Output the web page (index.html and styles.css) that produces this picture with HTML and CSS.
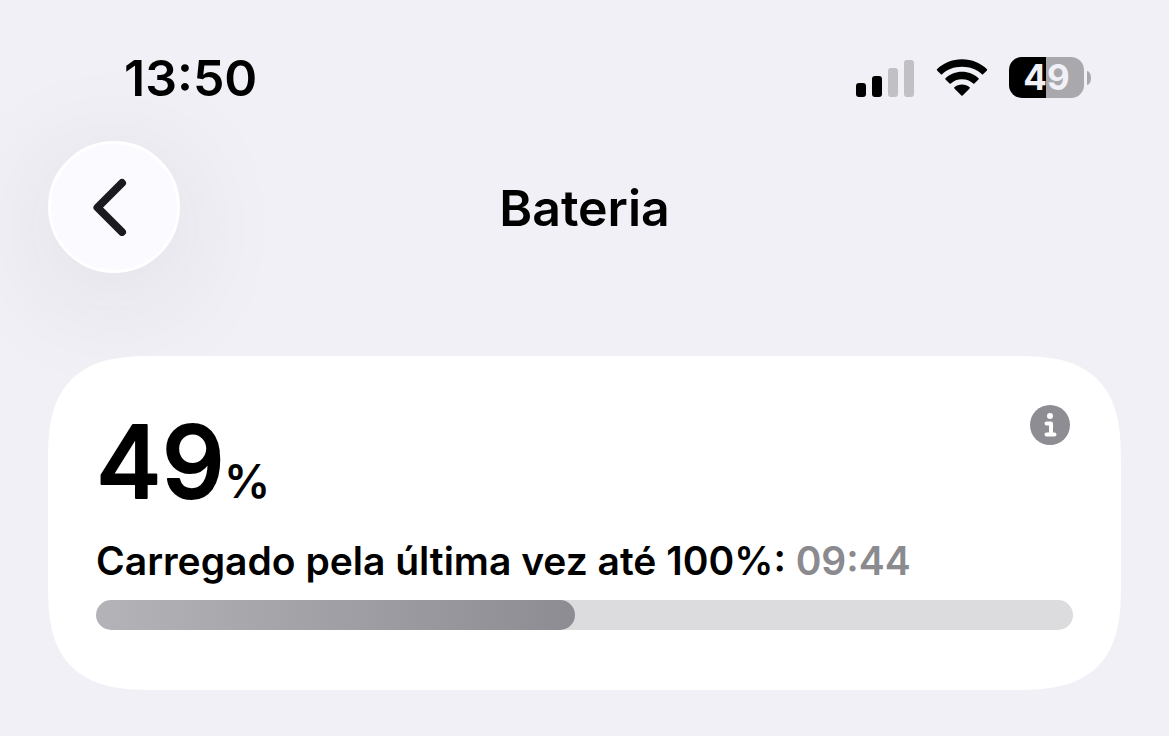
FILE: index.html
```html
<!DOCTYPE html>
<html lang="pt-BR">
<head>
<meta charset="utf-8">
<meta name="viewport" content="width=device-width, initial-scale=1">
<title>Bateria</title>
<link rel="stylesheet" href="styles.css">
</head>
<body>
<div class="status-bar">
  <time class="clock">13:50</time>
  <div class="indicators">
    <svg class="signal" width="58" height="38" viewBox="0 0 58 38" role="img" aria-label="Sinal">
      <rect x="0" y="24" width="10" height="14" rx="3"/>
      <rect x="16" y="17" width="10" height="21" rx="3"/>
      <rect class="off" x="32" y="9" width="10" height="29" rx="3"/>
      <rect class="off" x="48" y="1" width="10" height="37" rx="3"/>
    </svg>
    <svg class="wifi" width="52" height="38" viewBox="0 0 52 38" role="img" aria-label="Wi-Fi">
      <path d="M26 .2C36 .2 45 4.200 51 10.200Q51.500 10.800 50.900 11.400L47.100 15.200Q46.500 15.700 45.900 15.200C41 10.500 34 7.800 26 7.800S11 10.500 6.100 15.200Q5.500 15.700 4.900 15.200L1.100 11.400Q.5 10.800 1 10.200C7 4.200 16 .2 26 .2Z"/>
      <path d="M26 12.800C32.500 12.800 38.200 15.400 42.500 19.200Q43.100 19.800 42.500 20.400L38.400 24.500Q37.800 25.100 37.200 24.500C34.200 21.800 30.500 20.300 26 20.300S17.800 21.800 14.800 24.500Q14.200 25.100 13.600 24.500L9.500 20.400Q8.900 19.800 9.500 19.200C13.800 15.400 19.500 12.800 26 12.800Z"/>
      <path d="M26 25.500C28.900 25.500 31.500 26.500 33.600 28.200Q34.200 28.800 33.600 29.400L26.600 36.500Q26 37.100 25.400 36.500L18.400 29.400Q17.800 28.800 18.400 28.200C20.500 26.500 23.100 25.500 26 25.500Z"/>
    </svg>
    <div class="battery">
      <span class="battery-body">49</span>
      <span class="battery-cap"></span>
    </div>
  </div>
</div>

<header class="nav">
  <button class="back" type="button" aria-label="Voltar">
    <svg width="34" height="58" viewBox="0 0 34 58" aria-hidden="true">
      <path d="M29 5L4.500 29.500L29 54"/>
    </svg>
  </button>
  <h1 class="title">Bateria</h1>
</header>

<main class="card">
  <div class="card-head">
    <svg class="level" width="190" height="128" viewBox="0 0 190 128" role="img" aria-label="49%">
      <text class="level-number" x="0" y="102">49</text>
      <text class="level-unit" x="128" y="102">%</text>
    </svg>
    <button class="info" type="button" aria-label="Informações">
      <svg width="40" height="40" viewBox="0 0 40 40" aria-hidden="true">
        <circle class="info-disc" cx="20" cy="20" r="20"/>
        <circle class="info-dot" cx="20" cy="11" r="3"/>
        <path class="info-stem" d="M16.500 18.500H21V29M16.500 29.500H24.500"/>
      </svg>
    </button>
  </div>
  <label class="caption" for="charge">Carregado pela última vez até 100%: <time>09:44</time></label>
  <progress class="charge" id="charge" max="100" value="49">49%</progress>
</main>
</body>
</html>
```
FILE: styles.css
```css
* {
  box-sizing: border-box;
}

body {
  margin: 0;
  background: #f1f0f6;
  color: #000;
  font-family: Inter, "Liberation Sans", sans-serif;
}

button {
  border: 0;
  padding: 0;
  background: none;
  cursor: pointer;
}

svg {
  display: block;
}

.status-bar {
  display: flex;
  justify-content: space-between;
  align-items: flex-start;
  padding: 48px 78px 0 124px;
}

.clock {
  font-size: 50px;
  line-height: 60px;
  font-weight: 600;
}

.indicators {
  display: flex;
  align-items: center;
  padding-top: 9px;
}

.signal .off {
  fill: #c1c0c5;
}

.wifi {
  margin: 0 21px 0 22px;
}

.battery {
  display: flex;
  align-items: center;
  gap: 3px;
}

.battery-body {
  width: 75px;
  border-radius: 13px;
  background: linear-gradient(to right, #000 49%, #a9a8ad 49%);
  color: #f1f0f6;
  font-size: 35px;
  line-height: 41px;
  font-weight: 700;
  text-align: center;
}

.battery-cap {
  width: 4px;
  height: 14px;
  border-radius: 0 100% 100% 0 / 0 50% 50% 0;
  background: #a9a8ad;
}

.nav {
  display: grid;
  grid-template-columns: 1fr auto 1fr;
  align-items: center;
  padding: 33px 48px 0;
}

.back {
  display: grid;
  place-items: center;
  width: 132px;
  height: 132px;
  padding-right: 8px;
  border: 3px solid #fff;
  border-radius: 50%;
  background: #fbfaff;
  box-shadow: 0 20px 120px rgba(40, 35, 60, 0.1);
}

.back path {
  fill: none;
  stroke: #1b1a1f;
  stroke-width: 8;
  stroke-linecap: round;
  stroke-linejoin: round;
}

.title {
  margin: 0;
  padding-top: 2px;
  font-size: 50px;
  line-height: 60px;
  font-weight: 600;
}

.card {
  position: relative;
  margin: 83px 48px 46px;
  padding: 40px 48px 60px;
  border-radius: 82px;
  background: #fff;
}

@supports (corner-shape: superellipse(1.5)) {
  .card {
    border-radius: 108px;
    corner-shape: superellipse(1.5);
  }
}

.card-head {
  display: flex;
  justify-content: space-between;
  align-items: flex-start;
}

.level-number {
  font-size: 100px;
  font-weight: 500;
  stroke: #000;
  stroke-width: 2px;
  stroke-linejoin: round;
}

.level-unit {
  font-size: 46px;
  font-weight: 600;
}

.info {
  margin: 9px 3px 0 0;
}

.info-disc {
  fill: #8e8d94;
}

.info-dot {
  fill: #fff;
}

.info-stem {
  fill: none;
  stroke: #fff;
  stroke-width: 4;
  stroke-linecap: round;
  stroke-linejoin: round;
}

.caption {
  display: block;
  margin-top: 13px;
  font-size: 39px;
  line-height: 48px;
  font-weight: 600;
}

.caption time {
  color: #8b8a8f;
}

.charge {
  display: block;
  width: 100%;
  height: 30px;
  margin-top: 15px;
  border: 0;
  border-radius: 15px;
  overflow: hidden;
  appearance: none;
  background: #dcdbde;
}

.charge::-webkit-progress-bar {
  background: #dcdbde;
}

.charge::-webkit-progress-value {
  border-radius: 15px;
  background: linear-gradient(to right, #b4b3b8, #8d8c92);
}
```
